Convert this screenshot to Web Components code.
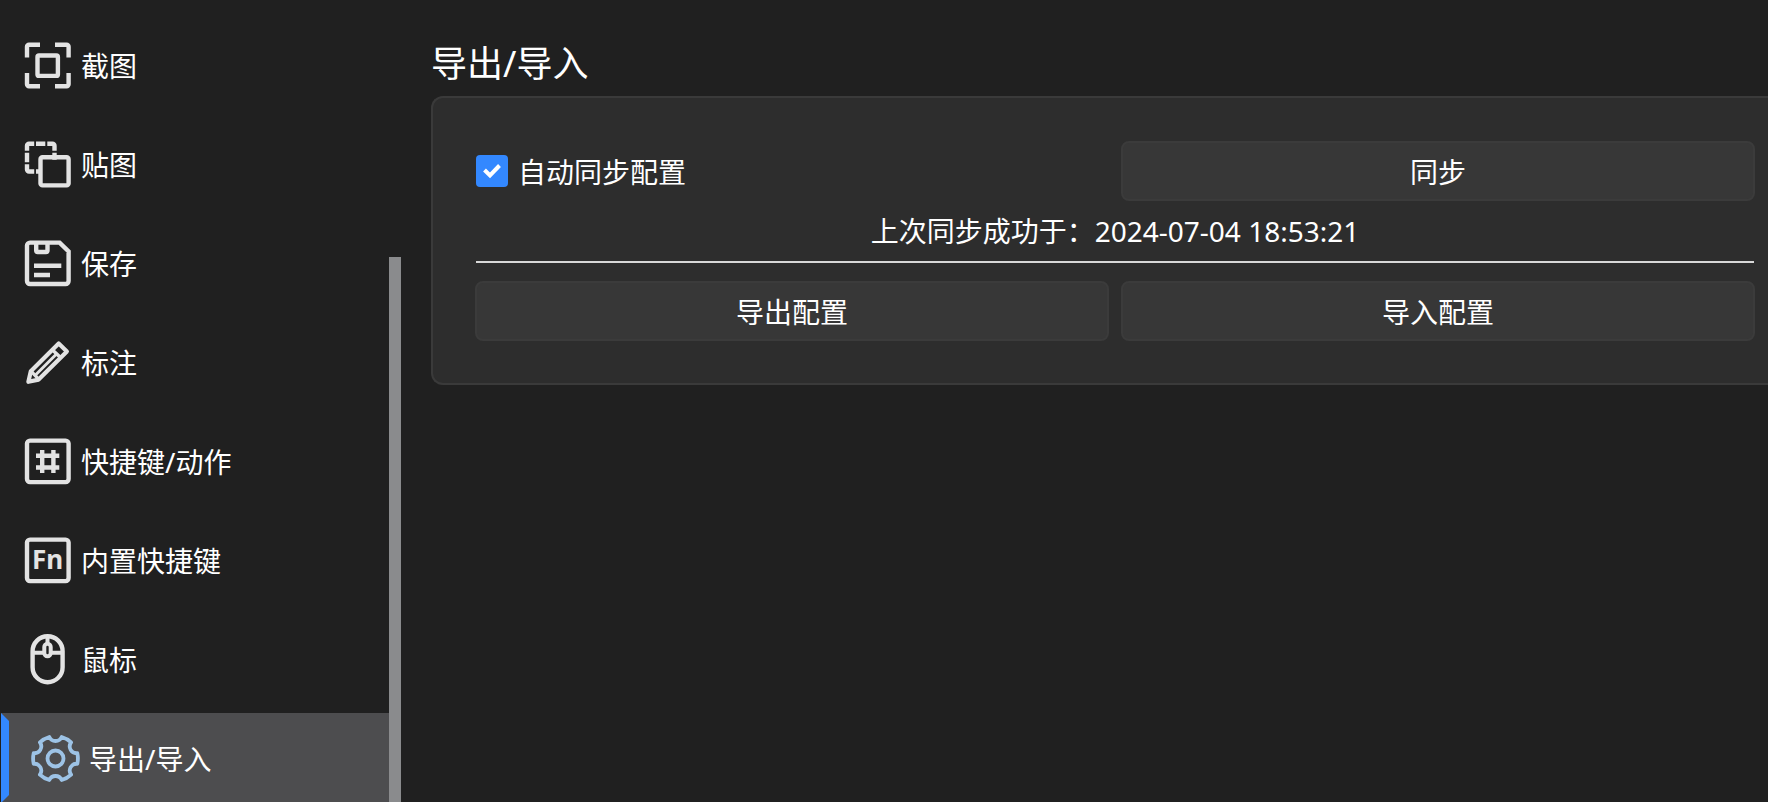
<!DOCTYPE html>
<html lang="zh-CN">
<head>
<meta charset="utf-8">
<meta name="viewport" content="width=device-width, initial-scale=1">
<title>导出/导入</title>
<style>
  body { margin: 0; background: #202020; color: #fff; font: 28px/40px "Noto Sans", "Noto Sans CJK SC", sans-serif; }
</style>
</head>
<body>
<settings-app>
  <side-nav slot="nav">
    <nav-item icon="capture" href="#capture">截图</nav-item>
    <nav-item icon="paste" href="#paste">贴图</nav-item>
    <nav-item icon="save" href="#save">保存</nav-item>
    <nav-item icon="annotate" href="#annotate">标注</nav-item>
    <nav-item icon="hotkey" href="#hotkey">快捷键/动作</nav-item>
    <nav-item icon="fn" href="#builtin">内置快捷键</nav-item>
    <nav-item icon="mouse" href="#mouse">鼠标</nav-item>
    <nav-item icon="gear" href="#transfer" active>导出/导入</nav-item>
  </side-nav>
  <settings-group heading="导出/导入">
    <check-option>自动同步配置</check-option>
    <push-button>同步</push-button>
    <sync-status>上次同步成功于：2024-07-04 18:53:21</sync-status>
    <push-button>导出配置</push-button>
    <push-button>导入配置</push-button>
  </settings-group>
</settings-app>

<script>
const define = (name, html, setup) => customElements.define(name, class extends HTMLElement {
  constructor() {
    super();
    const t = document.createElement('template');
    t.innerHTML = html;
    this.attachShadow({ mode: 'open' }).append(t.content.cloneNode(true));
  }
  connectedCallback() { if (setup) setup(this, this.shadowRoot); }
});

const icons = {
  capture: '<path d="M3 16.5V5.7a2 2 0 0 1 2-2H16M31 3.7H42.6a2 2 0 0 1 2 2V16.5M44.6 32V43.3a2 2 0 0 1-2 2H31M16 45.3H5a2 2 0 0 1-2-2V32"/><rect x="13.5" y="14.5" width="20.4" height="20.4" rx="1.5"/>',
  paste: '<path d="M3 10.7V5.7a2 2 0 0 1 2-2H10.2M12 3.7h9.3M23.3 3.7H28.5a2 2 0 0 1 2 2V10.7M3 12.7v9.6M3 24.3V29.5a2 2 0 0 0 2 2H10.2M12 31.5h3M30.5 12.7v7"/><rect x="16.5" y="17.3" width="28.1" height="28.1" rx="2"/>',
  save: '<path d="M6 3.6H35.6L44.6 12.4V42a3 3 0 0 1-3 3H6a3 3 0 0 1-3-3V6.6a3 3 0 0 1 3-3zM12.2 4V11.5a1.5 1.5 0 0 0 1.5 1.5H22a1.5 1.5 0 0 0 1.5-1.5V4M10 26.8H37.3M10 36H26"/>',
  annotate: '<g stroke-width="4.2" stroke-linejoin="round"><path d="M4.4 43.8L6.8 33.2L34.7 5.5L42.9 13.4L14.6 41.6z"/><path d="M11 37.5L33.5 15" stroke-width="3"/><path d="M28 11.5L37 20M7 33.2L14.6 41.2" stroke-width="3.4"/></g>',
  hotkey: '<rect x="3" y="3.6" width="41.6" height="41.5" rx="3"/><path d="M18.2 13V36M29.4 13V36M12 18.8H35.3M12 30.5H35.3"/>',
  fn: '<rect x="3" y="3.6" width="41.6" height="41.5" rx="3"/><text x="8" y="33" stroke="none" fill="currentColor" font-family="Noto Sans, sans-serif" font-weight="700" font-size="26">Fn</text>',
  mouse: '<rect x="8.6" y="1.2" width="30" height="46" rx="15"/><rect x="20.3" y="8.7" width="6.4" height="12.6" rx="3.2" stroke-width="4"/><path d="M9 17.8H20M27 17.8H38M23.5 2V8" stroke-width="4"/>',
  gear: '<g transform="translate(23.5 24.5)" stroke-width="3.8" stroke-linejoin="round"><path d="M21.8 -5.3Q23 0 21.8 5.3A6.8 6.8 0 0 0 15.6 16.1Q11.5 20 6.2 21.5A6.8 6.8 0 0 0 -6.2 21.5Q-11.5 20 -15.6 16.1A6.8 6.8 0 0 0 -21.8 5.3Q-23 0 -21.8 -5.3A6.8 6.8 0 0 0 -15.6 -16.1Q-11.5 -20 -6.2 -21.5A6.8 6.8 0 0 0 6.2 -21.5Q11.5 -20 15.6 -16.1A6.8 6.8 0 0 0 21.8 -5.3z"/><circle r="8"/></g>'
};

define('settings-app', `
  <style>
    :host { display: grid; grid-template-columns: auto minmax(0, 1fr); height: 100vh; overflow: hidden; }
    main { padding: 40px 0 0 30px; }
  </style>
  <slot name="nav"></slot>
  <main><slot></slot></main>`);

define('side-nav', `
  <style>
    :host { display: flex; width: 401px; min-height: 0; overflow: hidden; }
    nav { flex: 1; display: flex; flex-direction: column; gap: 9px; padding: 20px 0 0 1px; }
    .track { display: flex; flex-direction: column; justify-content: flex-end; width: 12px; }
    .thumb { height: 68%; background: #8a8b8d; }
  </style>
  <nav aria-label="设置"><slot></slot></nav>
  <div class="track"><div class="thumb"></div></div>`);

define('nav-item', `
  <style>
    :host { display: block; flex: none; }
    a { display: flex; align-items: center; gap: 9px; box-sizing: border-box; height: 90px; padding-left: 23px; color: #fff; text-decoration: none; }
    :host([active]) a { border: 8px solid transparent; border-left-color: #3388ff; background: #4d4d4f; }
    span { padding-top: 2px; }
    svg { width: 48px; height: 48px; flex: none; overflow: visible; fill: none; stroke: currentColor; stroke-width: 4.4; color: #e3e3e3; }
    :host([active]) svg { color: #9dc3e6; }
  </style>
  <a><svg viewBox="0 0 48 48" aria-hidden="true"></svg><span><slot></slot></span></a>`,
  (el, root) => {
    const a = root.querySelector('a');
    a.href = el.getAttribute('href');
    if (el.hasAttribute('active')) a.setAttribute('aria-current', 'page');
    root.querySelector('svg').innerHTML = icons[el.getAttribute('icon')];
  });

define('settings-group', `
  <style>
    :host { display: block; }
    h1 { margin: 0 0 8px; font-size: 36px; line-height: 48px; font-weight: 400; }
    section { display: grid; grid-template-columns: repeat(2, minmax(0, 1fr)); column-gap: 12px; padding: 43px 13px 42px 42px; background: #2d2d2d; border: 2px solid #3a3a3a; border-right: 0; border-radius: 12px 0 0 12px; }
  </style>
  <h1></h1>
  <section><slot></slot></section>`,
  (el, root) => { root.querySelector('h1').textContent = el.getAttribute('heading'); });

define('check-option', `
  <style>
    :host { display: flex; align-items: center; }
    label { display: flex; align-items: center; gap: 10px; padding-left: 1px; }
    .box { display: grid; width: 32px; height: 32px; }
    .text { padding-top: 2px; }
    input, svg { grid-area: 1 / 1; width: 32px; height: 32px; margin: 0; }
    input { appearance: none; border-radius: 4px; background: #3388ff; }
    svg { fill: none; stroke: #fff; stroke-width: 4; pointer-events: none; }
    input:not(:checked) { background: #373737; }
    input:not(:checked) + svg { display: none; }
  </style>
  <label><span class="box"><input type="checkbox" checked><svg viewBox="0 0 32 32" aria-hidden="true"><path d="M8.5 15L14 20.5L23.5 10.5"/></svg></span><span class="text"><slot></slot></span></label>`);

define('push-button', `
  <style>
    :host { display: block; }
    button { display: block; width: 100%; height: 60px; padding: 2px 0 0; border: 2px solid #3b3b3b; border-radius: 8px; background: #373737; color: inherit; font: inherit; }
  </style>
  <button type="button"><slot></slot></button>`);

define('sync-status', `
  <style>
    :host { display: block; grid-column: 1 / -1; margin: 0 1px 18px; line-height: 60px; text-align: center; border-bottom: 2px solid #d8d8d8; }
  </style>
  <slot></slot>`);
</script>
</body>
</html>
